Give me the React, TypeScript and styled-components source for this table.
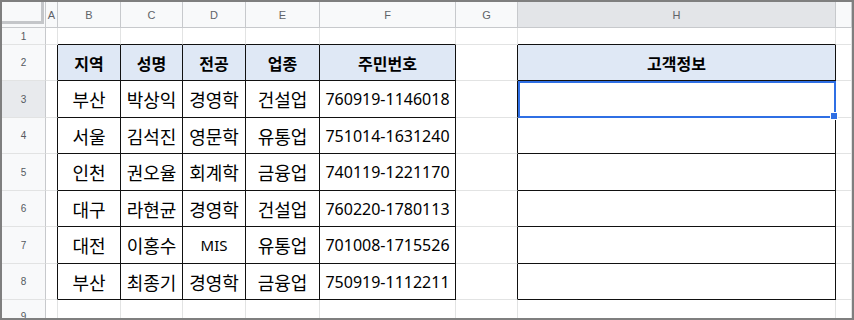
import styled, { createGlobalStyle } from "styled-components";

const GlobalStyle = createGlobalStyle`
  html, body {
    margin: 0;
    padding: 0;
    background: #ffffff;
  }
`;

// column widths: row header, A..H, I (fills rest)
const COL_WIDTHS = "44px 12px 63px 62px 63px 74px 136px 62px 318px 1fr";
const ROW_HEIGHTS = "26px 17px 36px 37px 36px 37px 36px 37px 36px 34px";
const LETTERS = ["A", "B", "C", "D", "E", "F", "G", "H", "I"];

const HEAD = ["지역", "성명", "전공", "업종", "주민번호"];
const ROWS = [
  ["부산", "박상익", "경영학", "건설업", "760919-1146018"],
  ["서울", "김석진", "영문학", "유통업", "751014-1631240"],
  ["인천", "권오율", "회계학", "금융업", "740119-1221170"],
  ["대구", "라현균", "경영학", "건설업", "760220-1780113"],
  ["대전", "이홍수", "MIS", "유통업", "701008-1715526"],
  ["부산", "최종기", "경영학", "금융업", "750919-1112211"],
];

const GRID = "#e2e3e3";
const HEADER_LINE = "#c7c9cc";
const DARK = "#111111";

// row 2..8, columns B..F (2..6) and H (8) carry black borders
const boxed = (r: number, c: number) =>
  r >= 2 && r <= 8 && ((c >= 2 && c <= 6) || c === 8);

type Kind = "head" | "body" | "num" | "latin";

function cellValue(r: number, c: number): { text: string; kind: Kind } | null {
  if (r === 2 && c >= 2 && c <= 6) return { text: HEAD[c - 2], kind: "head" };
  if (r === 2 && c === 8) return { text: "고객정보", kind: "head" };
  if (r >= 3 && r <= 8 && c >= 2 && c <= 6) {
    const text = ROWS[r - 3][c - 2];
    if (c === 6) return { text, kind: "num" };
    if (text === "MIS") return { text, kind: "latin" };
    return { text, kind: "body" };
  }
  return null;
}

const Frame = styled.div`
  width: 854px;
  height: 320px;
  box-sizing: border-box;
  border: 2px solid #7f7f7f;
  overflow: hidden;
  background: #ffffff;
`;

const Sheet = styled.div`
  display: grid;
  grid-template-columns: ${COL_WIDTHS};
  grid-template-rows: ${ROW_HEIGHTS};
`;

const Corner = styled.div`
  background: #f8f9fa;
  border-right: 1px solid ${HEADER_LINE};
  border-bottom: 1px solid ${HEADER_LINE};
  box-sizing: border-box;
`;

const FreezeBars = styled.div`
  width: 42px;
  height: 22px;
  box-sizing: border-box;
  border-right: 3px solid #c4c6c9;
  border-bottom: 3px solid #c4c6c9;
`;

const ColHeader = styled.div<{ $active?: boolean }>`
  display: flex;
  align-items: center;
  justify-content: center;
  box-sizing: border-box;
  background: ${(p) => (p.$active ? "#e3e5e8" : "#f8f9fa")};
  border-right: 1px solid ${HEADER_LINE};
  border-bottom: 1px solid ${HEADER_LINE};
  font-family: "Liberation Sans", Arial, sans-serif;
  font-size: 11px;
  color: #5f6368;
`;

const RowHeader = styled.div<{ $active?: boolean }>`
  display: flex;
  align-items: center;
  justify-content: center;
  box-sizing: border-box;
  background: ${(p) => (p.$active ? "#e8eaed" : "#f8f9fa")};
  border-right: 1px solid ${HEADER_LINE};
  border-bottom: 1px solid ${GRID};
  font-family: "Liberation Sans", Arial, sans-serif;
  font-size: 10px;
  color: #55595f;
`;

const Cell = styled.div<{ $right: boolean; $bottom: boolean; $head: boolean }>`
  position: relative;
  display: flex;
  align-items: center;
  justify-content: center;
  box-sizing: border-box;
  min-width: 0;
  white-space: nowrap;
  background: ${(p) => (p.$head ? "#dfe8f5" : "#ffffff")};
  border-right: 1px solid ${(p) => (p.$right ? DARK : GRID)};
  border-bottom: 1px solid ${(p) => (p.$bottom ? DARK : GRID)};
  color: #000000;
`;

const Text = styled.span<{ $kind: Kind }>`
  line-height: 1;
  font-family: ${(p) =>
    p.$kind === "num" || p.$kind === "latin"
      ? `"Noto Sans", "Noto Sans CJK KR", sans-serif`
      : `"Noto Sans CJK KR", "Noto Sans", sans-serif`};
  font-size: ${(p) =>
    p.$kind === "head" ? "16px" : p.$kind === "num" ? "16px" : p.$kind === "latin" ? "15px" : "18px"};
  font-weight: ${(p) => (p.$kind === "head" ? 700 : 400)};
  margin-top: ${(p) => (p.$kind === "head" ? "1px" : "0")};
`;

const Selection = styled.div`
  position: absolute;
  top: 0;
  left: 0;
  right: -1px;
  bottom: -1px;
  border: 2px solid #2f6fe4;
  z-index: 2;
  pointer-events: none;
`;

const FillHandle = styled.div`
  position: absolute;
  right: -4px;
  bottom: -4px;
  width: 6px;
  height: 6px;
  background: #2f6fe4;
  border: 1px solid #ffffff;
`;

export default function App() {
  const rows = [1, 2, 3, 4, 5, 6, 7, 8, 9];
  return (
    <>
      <GlobalStyle />
      <Frame>
        <Sheet>
          <Corner>
            <FreezeBars />
          </Corner>
          {LETTERS.map((l, i) => (
            <ColHeader key={l} $active={i === 7}>
              {l === "I" ? "" : l}
            </ColHeader>
          ))}
          {rows.map((r) => (
            <RowCells key={r} r={r} />
          ))}
        </Sheet>
      </Frame>
    </>
  );
}

function RowCells({ r }: { r: number }) {
  const cols = [1, 2, 3, 4, 5, 6, 7, 8, 9];
  return (
    <>
      <RowHeader $active={r === 3}>{r}</RowHeader>
      {cols.map((c) => {
        const v = cellValue(r, c);
        const right = boxed(r, c) || boxed(r, c + 1);
        const bottom = boxed(r, c) || boxed(r + 1, c);
        return (
          <Cell key={c} $right={right} $bottom={bottom} $head={r === 2 && boxed(r, c)}>
            {v && <Text $kind={v.kind}>{v.text}</Text>}
            {r === 3 && c === 8 && (
              <Selection>
                <FillHandle />
              </Selection>
            )}
          </Cell>
        );
      })}
    </>
  );
}
